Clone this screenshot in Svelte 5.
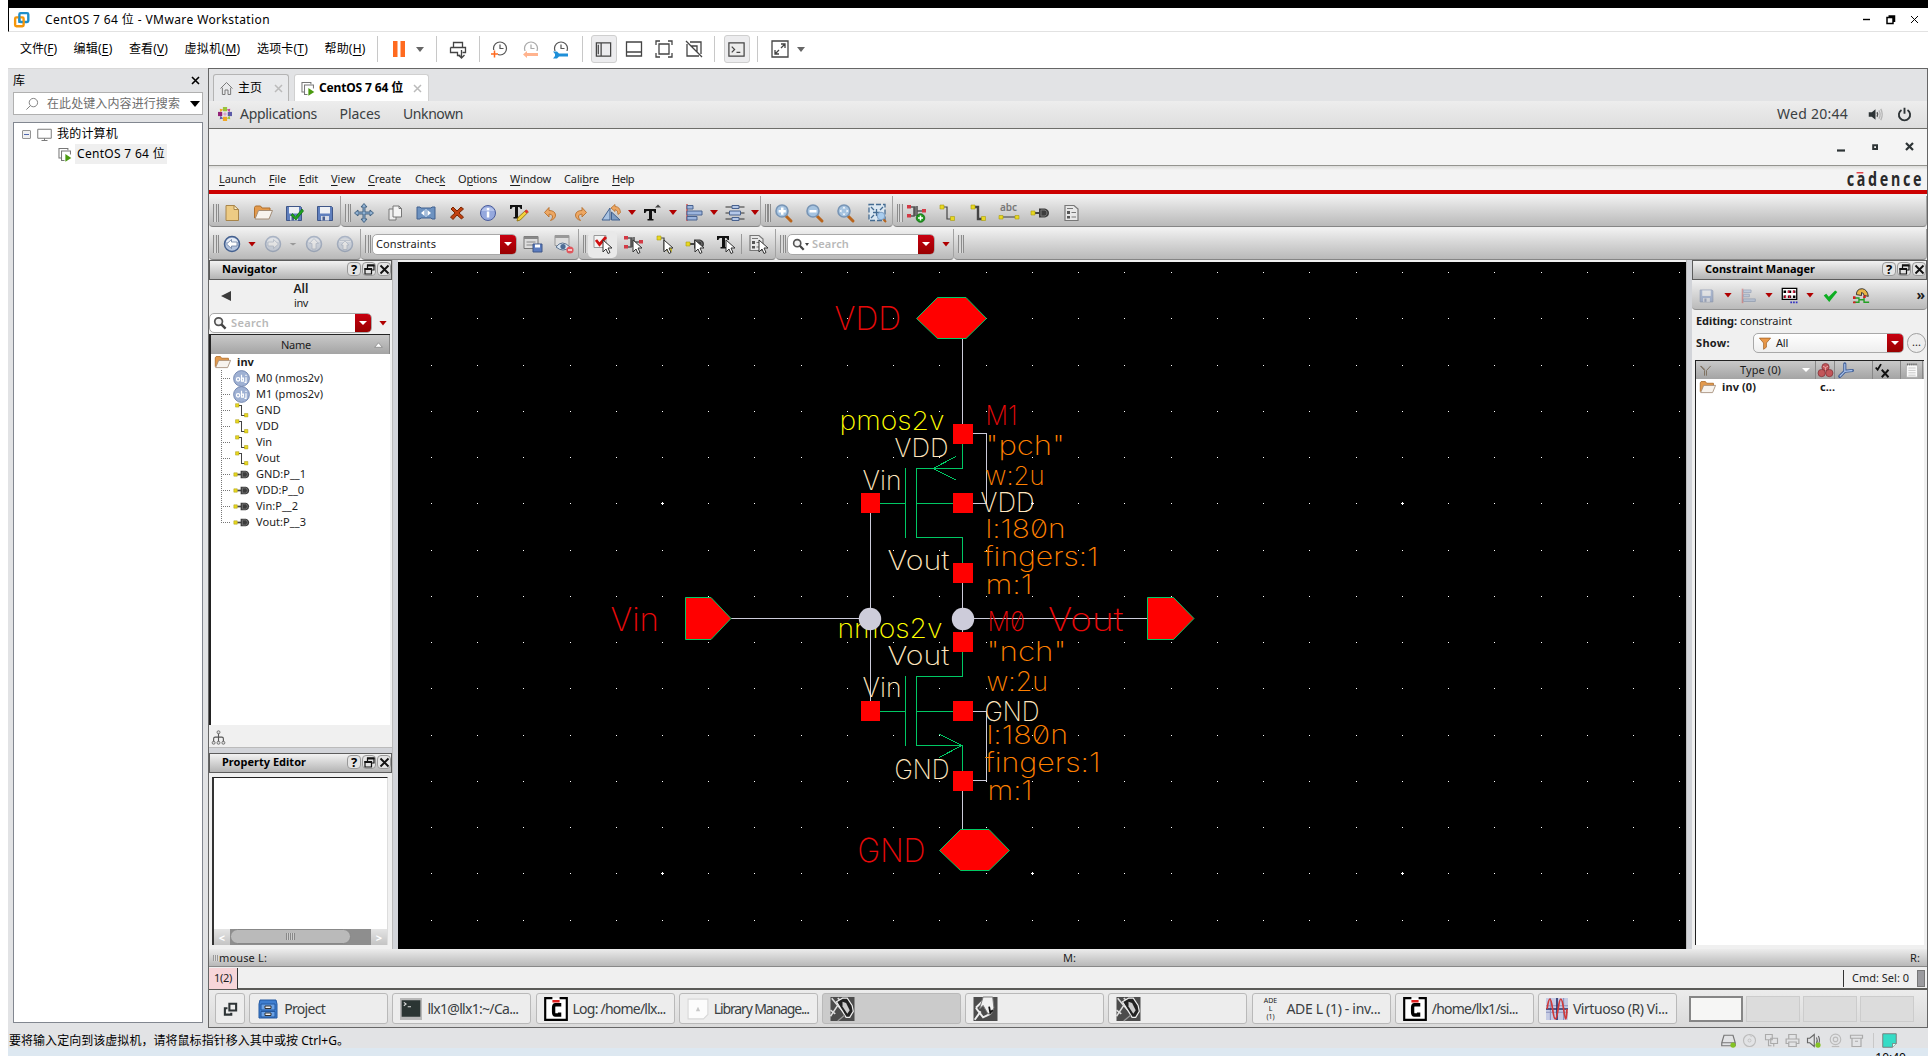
<script>
  // Spreads the letters of a label so that it takes up the given width.
  function fit(node, width) {
    if (!width) return;
    const natural = node.getBoundingClientRect().width;
    node.style.letterSpacing = (width - natural) / node.textContent.length + 'px';
  }

  const cursor = '<path d="M10 6v12l3-3 2 4.500 2-1-2-4.500h4z" fill="#fff" stroke="#333" stroke-width="1"/>';
  const disc = (o, arrow) =>
    `<g opacity="${o}"><circle cx="10" cy="10" r="7.500" fill="#b4c4de" stroke="#44608f" stroke-width="1.500"/><path d="M4 8a6.500 6.500 0 0 1 12 0z" fill="#e8eef8"/><g fill="#fff" stroke="#6b7f9f" stroke-width=".8">${arrow}</g></g>`;
  const floppy = '<path d="M2.500 3.500h14l1 1v13h-15z" fill="#5f7fbd" stroke="#3f5688"/><path d="M5 4h10v6.500H5z" fill="#eef0f4"/><path d="M6 13h8v4.500H6z" fill="#d6dbe6"/><path d="M7.500 13.500h2.500v4H7.500z" fill="#4a5f8f"/>';
  const wire = (w) => `<path d="M5 4h5v12h5" fill="none" stroke="#444" stroke-width="${w}"/><path d="M3 2h4v4H3zM13.500 13.500h4v4h-4z" fill="#e8d820" stroke="#a89a10" stroke-width=".6"/>`;
  const pin = '<path d="M5 10h5" stroke="#444" stroke-width="2"/><path d="M9 5.500h6q4 1 4 4.500t-4 4.500H9z" fill="#3c3c3c"/><path d="M11 7h4q2 1 2 3t-2 3h-4z" fill="none" stroke="#777"/><path d="M1 8h4v4H1z" fill="#e8d820" stroke="#a89a10" stroke-width=".6"/>';
  const inst = '<path d="M3 4h5v9H3M8 4h1v9M11 3v10M11 8h6" fill="none" stroke="#555" stroke-width="1.600"/><path d="M1 2h4v3.500H1zM1 11h4v3.500H1zM16 6h4v3.500h-4z" fill="#d33a45"/>';
  const lens = (inner) => `<path d="m12 13 5 5" stroke="#b8641c" stroke-width="3" stroke-linecap="round"/><circle cx="8" cy="8" r="6" fill="#a5c3e0" stroke="#7895b5" stroke-width="1.600"/>${inner}`;
  const doc = '<path d="M4 2.500h9l4 3.500v11.500H4z" fill="#e8e8e8" stroke="#777" stroke-width="1.200"/><path d="M6 8h3v3H6zM6 13h3v2.500H6z" fill="#555"/><path d="M10.500 9.500h4.500M10.500 14h4.500M6 5.500h6" stroke="#777"/>';
  const clock = '<circle cx="10" cy="9.500" r="6.500" fill="none" stroke="#555" stroke-width="1.200"/><path d="M10 5.500v4h3.500" fill="none" stroke="#555" stroke-width="1.200"/>';
  const vm = '<path d="M6 14H3.500V3H14v2" fill="none" stroke="#777" stroke-width="1.200"/><path d="M10 17H6.500V6H17v4" fill="none" stroke="#777" stroke-width="1.200"/><path d="m11 9.500 7 4.500-7 4.500z" fill="#4a9a10"/>';
  const schem = '<path d="M0 0h20v20H0z" fill="#4c4c4c"/><path d="M0 16 6 7l8 9M1 1l5 6M6 1l6 5M0 11l4 3" stroke="#ddd" stroke-width="1.300" fill="none"/><path d="m5 4 5-3h4l4 6 1 5-3 5h-3l-3-5z" fill="#222" stroke="#eee" stroke-width="1"/><path d="m10 4 3 1 3 6-2 3-4-6z" fill="#ccc"/><path d="m12 15-6 5" stroke="#999"/>';

  const icons = {
    new: '<path d="M4 2.500h8l4.500 4v11H4z" fill="#edcb84" stroke="#a8854a"/><path d="M12 2.500v4h4.500z" fill="#fff0c8" stroke="#a8854a"/>',
    open: '<path d="M1.500 15V4.500l1-1.500h5l1.500 2h8v3" fill="#e39a4c" stroke="#b06f2c"/><path d="m2 16 3.500-8.500H19.500L16 16z" fill="#f7f3ee" stroke="#a38d78"/>',
    saveok: floppy + '<path d="m8.500 10.500 3 3.500 6.500-8 1.500 2-7.500 9-5-4.500z" fill="#1fa51f" stroke="#0c6a0c" stroke-width=".7"/>',
    save: floppy,
    saveoff: `<g opacity=".4">${floppy}</g>`,
    move: '<path d="M10 0.500 13 4h-2v5h5V7l3.500 3-3.500 3v-2h-5v5h2l-3 3.500L7 16h2v-5H4v2L.5 10 4 7v2h5V4H7z" fill="#8fb0d0" stroke="#3a5a7c" stroke-width=".9"/>',
    copy: '<path d="M4 6h7v11H4z" fill="#eee" stroke="#777"/><path d="M8 3h6l2.500 2.500V14H8z" fill="#f4f4f4" stroke="#777"/><path d="M14 3v2.500h2.500" fill="none" stroke="#777"/>',
    stretch: '<path d="M1 4h3l1 1h10l1-1h3v12h-3l-1-1H5l-1 1H1z" fill="#6d92c0" stroke="#41618f"/><path d="M8.500 7v6L5 10zM11.500 7v6l3.500-3z" fill="#fff"/><path d="M9.500 6h1v8h-1z" fill="#dfe9f5"/>',
    del: '<path d="m4 6 2-2 4 4 4-4 2.500 2L12 10l4.500 4-2 2-4.500-4-4 4.500L3.500 14 8 10z" fill="#c04010" stroke="#7a2500"/>',
    info: '<circle cx="10" cy="10" r="7.500" fill="#95a8dd" stroke="#4a5c9c"/><path d="M3.500 8a7 6 0 0 1 13 0z" fill="#b4c2ea"/><path d="M8.800 8.500h2.500v6H8.800zM8.800 5h2.500v2.300H8.800z" fill="#fff"/>',
    tedit: '<path d="M1 2h12v4h-1.500q0-2-2-2H9v10h1.500v1.500H4.500V14H6V4H4.500q-2 0-2 2H1z" fill="#111"/><path d="m8 18 1-3.500L17 7l2.300 2-8 8z" fill="#f2d23c" stroke="#8a6a00" stroke-width=".8"/><path d="m15.500 8.500 2-2 2 2-2 2z" fill="#d33"/>',
    undo: '<path d="M4.500 9.500 9 4.500v3q6 0 6.500 4.500 0 4-5 5.500 2.500-2.500 2-4.500-.8-2-3.500-2v3z" fill="#eda763" stroke="#b8702c" stroke-width=".9"/>',
    redo: '<path d="M15.500 9.500 11 4.500v3q-6 0-6.500 4.500 0 4 5 5.500-2.500-2.500-2-4.500.8-2 3.500-2v3z" fill="#eda763" stroke="#b8702c" stroke-width=".9"/>',
    rotate: '<path d="M8 5v12H0z" fill="#a9c3e2" stroke="#41618f"/><path d="M9.500 9 18 17H9.500z" fill="#7d9cc4" stroke="#41618f"/><path d="m9 5 4-3.500v2q5 0 5.500 6l-2.500 2q.3-4.500-3-5v2z" fill="#eda763" stroke="#b8702c" stroke-width=".8"/>',
    tup: '<path d="M1 6h12v4h-1.500q0-2-2-2H9v8h1.500v1.500H4.500V16H6V8H4.500q-2 0-2 2H1z" fill="#111"/><path d="M12 4.500 15 1.500l3 3z" fill="#444"/>',
    align: '<path d="M3 1v17" stroke="#c33" stroke-width="1.200"/><path d="M3 2.500h6v3.500H3zM3 8h15v4H3zM3 13.500h10v3.500H3z" fill="#9bb4dd" stroke="#48628f"/>',
    alignoff: '<g opacity=".4"><path d="M3 2v17" stroke="#c33" stroke-width="2"/><path d="M4 3.500h9v3H4zM4 8.500h7v3H4zM4 14h14v3H4z" fill="#9bb4dd" stroke="#48628f"/></g>',
    distrib: '<path d="M0.500 4h19M.5 10h19M.5 16h19" stroke="#333"/><path d="M7 2.500h7v3H7zM4.500 8h11v4h-11zM7 14.500h7v3H7z" fill="#b5c8e8" stroke="#48628f"/>',
    zoomin: lens('<path d="M7 4.500h2.500v2.400h2.300v2.500H9.500v2.300H7V9.400H4.600V6.900H7z" fill="#fff"/>'),
    zoomout: lens('<path d="M4.500 7h7v2.500h-7z" fill="#fff"/>'),
    zoomfit: lens('<path d="m8 3.500 1.500 2h-3zM8 12.500l1.500-2h-3zM3.500 8l2-1.500v3zM12.500 8l-2-1.500v3z" fill="#fff"/>'),
    zoomarea: '<path d="M2 1.500h16v16H2z" fill="#dce8f2" stroke="#456c92" stroke-width="1.300" stroke-dasharray="5 2"/><path d="M6 9.500h7M9.500 6v7M4 4l3 3M16 4l-3 3M4 15l3-3" stroke="#456c92" fill="none" stroke-width="1.300"/><path d="m15 15 4 4" stroke="#b8641c" stroke-width="2"/><circle cx="14" cy="13" r="3.800" fill="#a9cdee" stroke="#7fa0c4"/>',
    instadd: inst + '<circle cx="14.500" cy="15" r="4.300" fill="#1d981d" stroke="#0a600a" stroke-width=".7"/><path d="M14.500 12.500v5M12 15h5" stroke="#fff" stroke-width="1.500"/>',
    wire: wire(1.2),
    widewire: wire(2.4),
    label: '<path d="M2 14h16" stroke="#555" stroke-width="1.200"/><path d="M0 12.500h4v3.500H0zM16 12.500h4v3.500h-4z" fill="#e8d820" stroke="#a89a10" stroke-width=".6"/>',
    pin,
    doc,
    back: disc(1, '<path d="m4.500 10 5-4.500V8H15v4H9.500v2.500z"/>'),
    fwd: disc(0.35, '<path d="m15.500 10-5-4.500V8H5v4h5.500v2.500z"/>'),
    up: disc(0.35, '<path d="m10 4.500 4.500 5H12V15H8V9.500H5.500z"/>'),
    top: disc(0.35, '<path d="M5 5h10v1.500H5zM10 7l4 4h-2v4.500H8V11H6z"/>'),
    panelsave: '<path d="M1 2.500h14v12H1z" fill="#ddd" stroke="#777"/><path d="M1 2.500h14v2.500H1z" fill="#888"/><path d="M3.500 8h9M3.500 11h9" stroke="#888"/><path d="M10 10h9v8h-9z" fill="#5b7cc0" stroke="#3f5688"/><path d="M12 10.500h5v3h-5z" fill="#fff"/>',
    paneleye: '<path d="M1 1.500h14v10H1z" fill="#ddd" stroke="#999"/><path d="M1 1.500h14v2.500H1z" fill="#999"/><path d="M2 13q6-8 14 0-7 6-14 0z" fill="#d8e4f0" stroke="#5c7390"/><circle cx="9" cy="12.500" r="2.600" fill="#4d6c94"/><circle cx="16" cy="16" r="3.600" fill="#e0565c"/><path d="M14 16h4" stroke="#fff" stroke-width="1.300"/>',
    selcheck: '<path d="M1 1.500h12v12H1z" fill="#f4f4f4" stroke="#999"/><path d="m3 6 3.500 4.500L13 3" fill="none" stroke="#d01010" stroke-width="2.800"/>' + cursor,
    selinst: inst + cursor,
    selwire: wire(1.2) + cursor,
    selpin: pin + cursor,
    seltext: '<path d="M1 2h12v4h-1.500q0-2-2-2H9v9h1.500v1.500H4.500V13H6V4H4.500q-2 0-2 2H1z" fill="#111"/>' + cursor,
    seldoc: `<g transform="translate(-3 -1)">${doc}</g>` + cursor,
    matrix: '<path d="M1.500 1.500h17v13h-17z" fill="#fff" stroke="#000" stroke-width="1.500"/><path d="M3 4h3v3H3zM8 4h4v3H8zM14 4h3v3h-3zM3 10h3v3H3zM8 10h4v3H8zM14 10h3v3h-3z" fill="#000"/><path d="M8 4h2v3H8zM14 4h2v3h-2zM4 10h2v3H4zM9 10h2v3H9z" fill="#e02040"/><path d="M11 18h9" stroke="#3030c0" stroke-width="2" stroke-dasharray="2 1.200"/>',
    check: '<path d="m2 10 3-2 3 3.500L15.500 4 18 6 8.500 17.500z" fill="#0eae22"/>',
    revert: '<path d="M4 9q0-7 7-7 6 1 7 9l-5-1q0-3-3-3.500V10z" fill="#e9b445" stroke="#222"/><path d="M1 13h6v5H1m6-3h6m0-3v6h6" fill="none" stroke="#22a022" stroke-width="1.600"/><path d="M0 11h3v3H0zM0 17h3v2H0zM12 10h3v3h-3z" fill="#d02020"/>',
    funnel: '<path d="M2 3h16l-6 7v6l-4 3v-9z" fill="#e99848" stroke="#9b5a20"/>',
    funneloff: '<path d="m2 3 6.500 7v8M18 3l-6.500 7v8M3 3l6.500 6" fill="none" stroke="#7d7060" stroke-width="1.500"/>',
    cubes: '<g fill="#c2565a" stroke="#7c2b30" stroke-width=".8"><circle cx="10" cy="6" r="4.300"/><circle cx="5.500" cy="13" r="4.300"/><circle cx="14.500" cy="13" r="4.300"/></g><path d="m7 5 3 1.500L13 5M10 6.500V10" stroke="#f0b0b0" fill="none"/>',
    axes: '<path d="M8 2v9l-6 6M8 11l9-1" fill="none" stroke="#3a5a95" stroke-width="3.600" stroke-linecap="round"/><path d="M8 2v9l-6 6M8 11l9-1" fill="none" stroke="#a8c0e8" stroke-width="1.500"/>',
    cx: '<path d="m1 6 2.500 3L8 1.500M9 2" fill="none" stroke="#111" stroke-width="2.500"/><path d="m9 9 9 10M18 9 9 19" stroke="#111" stroke-width="2.500"/>',
    notes: '<path d="M3 3h14v16H3z" fill="#fafafa" stroke="#aaa"/><path d="M4 3h12" stroke="#555" stroke-width="2.500" stroke-dasharray="1.300 1.300"/><path d="M5.500 7.500h9M5.500 10.500h9M5.500 13.500h9M5.500 16.500h9" stroke="#bbb"/>',
    obj: '<circle cx="10" cy="10" r="9.300" fill="#9fb1d3" stroke="#6c80ab"/><circle cx="6" cy="11" r="2" fill="none" stroke="#fff" stroke-width="1.400"/><path d="M10 5.500v7.500h2.300v-3.500H10M15.300 8.500v6h-1.800M15.300 5.500v1.500" fill="none" stroke="#fff" stroke-width="1.400"/>',
    tree: '<path d="M10 4v12M3.500 16v-4.500q0-2 2-2h9q2 0 2 2V16" fill="none" stroke="#555" stroke-width="1.500"/><g fill="#ddd" stroke="#555"><circle cx="10" cy="3" r="2"/><circle cx="3.500" cy="17" r="2"/><circle cx="10" cy="17" r="2"/><circle cx="16.500" cy="17" r="2"/></g>',
    lensgray: '<circle cx="8" cy="8" r="5.500" fill="#f4f4f4" stroke="#555" stroke-width="2.500"/><path d="m12 12 6 6" stroke="#444" stroke-width="3.500"/>',
    pause: '<path d="M4 2h4.500v16H4zM11.500 2H16v16h-4.500z" fill="#ff6a1f"/>',
    send: '<path d="M5.500 3.500h9v5h-9zM2.500 8.500h15v5h-3M2.500 8.500v5h7v3h3" fill="none" stroke="#444" stroke-width="1.300"/><path d="M13.500 11v8m-3-3 3 3 3-3" fill="none" stroke="#444" stroke-width="1.300"/>',
    snap: clock + '<path d="M0 11h8v8H0z" fill="#fff"/><path d="M4.500 11.500v7M1 15h7" stroke="#ff6a1f" stroke-width="1.500"/>',
    snapback: `<g opacity=".5">${clock}<path d="M1 12h18v8H1z" fill="#fff"/><path d="m2 15.500 4-3.500v2h11v3H6v2z" fill="#ff6a1f"/></g>`,
    snapman: clock + '<path d="M1 12h18v8H1z" fill="#fff"/><path d="M2 12.500h4l2 2h9v3H8l-2 2H2l2-2.500v-2z" fill="#1e8fd8"/>',
    side: '<path d="M2.500 3h15v14h-15zM7.500 3v14M4.500 5v10" fill="none" stroke="#444" stroke-width="1.300"/>',
    bottom: '<path d="M2.500 3h15v14h-15zM2.500 13h15" fill="none" stroke="#444" stroke-width="1.300"/>',
    full: '<path d="M2 6V2h4M14 2h4v4M18 14v4h-4M6 18H2v-4M5 5h10v10H5z" fill="none" stroke="#444" stroke-width="1.300"/>',
    unity: '<path d="M3 5v12h12M6 3h11v12M2 2l16 16M7 7h6v6" fill="none" stroke="#444" stroke-width="1.300"/>',
    console: '<path d="M2 3h16v14H2z" fill="#ececec" stroke="#444" stroke-width="1.300"/><path d="m5 7 3 3-3 3M10 13h4" fill="none" stroke="#444" stroke-width="1.300"/>',
    expand: '<path d="M2 2h16v16H2zM11 5h4v4M15 5l-4 4M9 15H5v-4M5 15l4-4" fill="none" stroke="#444" stroke-width="1.300"/>',
    vmware: '<rect x="7.500" y="2.500" width="10.500" height="10.500" rx="1.500" fill="none" stroke="#1f8ec9" stroke-width="2.800"/><rect x="2.500" y="7.500" width="10" height="10.500" rx="1.500" fill="none" stroke="#f5960a" stroke-width="2.800"/><path d="M7.500 6v7H11" fill="none" stroke="#1f8ec9" stroke-width="2.400"/>',
    home: '<path d="m2 10 8-8 8 8M4.500 9v9H8v-6h4v6h3.500V9" fill="none" stroke="#777" stroke-width="1.300"/>',
    vm,
    monitor: '<path d="M1 3h18v12H1zM10 15v3M6 18h8" fill="none" stroke="#777" stroke-width="1.300"/>',
    search: '<circle cx="12" cy="8" r="6" fill="none" stroke="#777" stroke-width="1.300"/><path d="m8 12-6 6" stroke="#777" stroke-width="1.300"/>',
    gnome: '<path d="M7 0h6v6H7z" fill="#9ac43c"/><path d="M7 14h6v6H7z" fill="#efa724"/><path d="M0 7h6v6H0z" fill="#932279"/><path d="M14 7h6v6h-6z" fill="#5c5ba8"/><path d="m2.500 2.500 5 1-4 4z" fill="#efa724"/><path d="m17.500 2.500-5 1 4 4z" fill="#c04a94"/><path d="m2.500 17.500 5-1-4-4z" fill="#5c5ba8"/><path d="m17.500 17.500-5-1 4-4z" fill="#9ac43c"/><path d="m10 6 1 3 3 1-3 1-1 3-1-3-3-1 3-1z" fill="#d8a0c8"/>',
    volume: '<path d="M1 7h4l5-4v14l-5-4H1z" fill="#2e3436"/><path d="M12 7q2 3 0 6" fill="none" stroke="#555" stroke-width="2"/><path d="M14.500 4.500q3.500 5.500 0 11M17 2.500q4 7.500 0 15" fill="none" stroke="#b5b5b5" stroke-width="1.800"/>',
    power: '<path d="M6 4a7.500 7.500 0 1 0 8 0M10 1v8" fill="none" stroke="#2e3436" stroke-width="2.500"/>',
    switcher: '<path d="M8.500 3h9v9h-9zM6 9H2.500v8.500H11V15" fill="none" stroke="#2e3436" stroke-width="2.800"/>',
    cabinet: '<path d="M2 1h16l1 4v14H1V5z" fill="#3e7ed0" stroke="#2358a0"/><path d="M3 5h14v6H3zM3 12.500h14v5.500H3z" fill="#6ba2e6" stroke="#2358a0"/><path d="M7 7h6v2.500H7zM7 14h6v2.500H7z" fill="#f2f2f2" stroke="#333"/>',
    term: '<path d="M0 0h20v20H0z" fill="#b8b8b8"/><path d="M1.500 2h17v15h-17z" fill="#2b3533"/><path d="m3.500 4 2 1.500-2 1.500M7 8h3" stroke="#ddd" fill="none"/>',
    cad: '<path d="M7 1H1v18h18V1h-6" fill="#fff" stroke="#000" stroke-width="1.800"/><path d="M7 3.500h6" stroke="#e02020" stroke-width="2"/><path d="M13 8V6.500H9.500Q8 6.500 8 9v3.500q0 2.500 1.500 2.500H13v-2" fill="none" stroke="#000" stroke-width="2.800"/>',
    paper: '<path d="M1 1h18v14l-4 4H1z" fill="#fcfcfc" stroke="#d8d8d8"/><path d="m8 12 2-4 2 4z" fill="#c8c8c8"/>',
    schem,
    sym: '<path d="M0 0h20v20H0z" fill="#4c4c4c"/><path d="m1 19 5-7M2 9l6-6M2 9l6 8 6-3" stroke="#eee" stroke-width="1.600" fill="none"/><path d="m8 0h8l1 9-2 5-3 0-4-7-3 3z" fill="#f0f0f0" stroke="#777" stroke-width=".8"/><path d="m13 8 1 5 2-2" stroke="#111" stroke-width="1.500" fill="none"/>',
    wave: '<path d="M0 0h20v20H0z" fill="#c5cbe4"/><path d="M0 7h20M0 13h20M4 0v20M16 0v20" stroke="#8a93bd"/><path d="M0 10h20M10 0v20" stroke="#26306a" stroke-width="1.500"/><path d="M1 10q2.500-18 5 0t5 0 5 0 3 0" fill="none" stroke="#d03a3a" stroke-width="1.600"/>',
    hdd: '<path d="M4 3h12l3 10v4H1v-4zM1 13h18" fill="none" stroke="#777" stroke-width="1.600"/><circle cx="16" cy="16" r="3.500" fill="#84c225"/>',
    cd: '<circle cx="10" cy="10" r="8" fill="none" stroke="#bbb" stroke-width="1.500"/><circle cx="10" cy="10" r="2" fill="none" stroke="#bbb"/><path d="m10 3 3 2" stroke="#bbb"/>',
    net: '<path d="M2 2h9v7H2zM9 7h9v7H9zM6 9v8h4M13 14v4" fill="none" stroke="#aaa" stroke-width="1.500"/>',
    printer: '<path d="M5 8V2h10v6M5 14H1.500V8h17v6H15M5 12h10v6H5z" fill="none" stroke="#aaa" stroke-width="1.600"/>',
    sound: '<path d="M2 7h3l6-5v16l-6-5H2zM14 6q2 4 0 8M16.500 4q3 6 0 11" fill="none" stroke="#666" stroke-width="1.500"/><circle cx="16" cy="16" r="3.500" fill="#84c225"/>',
    cam: '<circle cx="10" cy="8.500" r="7" fill="none" stroke="#bbb" stroke-width="1.500"/><circle cx="10" cy="8.500" r="3" fill="none" stroke="#bbb" stroke-width="1.500"/><path d="M5 18h10" stroke="#bbb" stroke-width="1.500"/>',
    box: '<path d="M2 3h16v4H2zM4 7v11h12V7M8 11h4" fill="none" stroke="#aaa" stroke-width="1.600"/>',
    note: '<path d="M1 1h18v13l-5 5H1z" fill="#35dcc6" stroke="#777" stroke-width="1.200"/><path d="M14 19v-5h5" fill="#d8fff8" stroke="#777"/>'
  };

  const vmMenus = [['文件', 'F', 37], ['编辑', 'E', 39], ['查看', 'V', 39], ['虚拟机', 'M', 56], ['选项卡', 'T', 51], ['帮助', 'H', 41]];
  // Each tool: kind or icon name, distance from the previous tool's centre.
  const vmTools = [['|', 12], ['pause', 21], ['v', 21], ['|', 17], ['send', 21], ['|', 22], ['snap', 20], ['snapback', 31], ['snapman', 30], ['|', 22], ['side*', 21], ['bottom', 30], ['full', 30], ['unity', 30], ['|', 21], ['console*', 22], ['|', 21], ['expand', 22], ['v', 21]];

  const menus = [['', 'L', 'aunch', 37, 13], ['', 'F', 'ile', 17, 13], ['', 'E', 'dit', 19, 13], ['', 'V', 'iew', 24, 13], ['', 'C', 'reate', 33, 14], ['Chec', 'k', '', 30, 13], ['O', 'p', 'tions', 39, 13], ['', 'W', 'indow', 41, 13], ['Cali', 'b', 're', 35, 13], ['', 'H', 'elp', 22, 0]];

  const row1 = [
    { w: 132, items: ['new', 'open', 'saveok', 'save'] },
    { w: 420, items: ['move', 'copy', 'stretch', 'del', 'info', 'tedit', 'undo', 'redo', 'rotate', 'v', 'tup', 'v', 'align', 'v', 'distrib', 'v'] },
    { w: 132, items: ['zoomin', 'zoomout', 'zoomfit', 'zoomarea'] },
    { w: 0, items: ['instadd', 'wire', 'widewire', 'label', 'pin', 'doc'] }
  ];
  const row2 = [
    { w: 152, items: ['back', 'v', 'fwd', '-', 'up', 'top'] },
    { w: 218, items: ['combo', 'panelsave', 'paneleye'] },
    { w: 197, items: ['selcheck', 'selinst', 'selwire', 'selpin', 'seltext', '|', 'seldoc'] },
    { w: 178, items: ['search', 'v'] },
    { w: 0, items: [] }
  ];

  const nets = [['obj', 'M0 (nmos2v)', 67], ['obj', 'M1 (pmos2v)', 67], ['wire', 'GND', 25], ['wire', 'VDD', 23], ['wire', 'Vin', 16], ['wire', 'Vout', 24], ['pin', 'GND:P__1', 50], ['pin', 'VDD:P__0', 48], ['pin', 'Vin:P__2', 42], ['pin', 'Vout:P__3', 50]];
  const cmTools = [['saveoff', 14], ['v', 22], ['alignoff', 20], ['v', 21], ['matrix', 20], ['v', 21], ['check', 20], ['revert', 31]];
  const tasks = [
    ['cabinet', 'Project', 41, 20], ['term', 'llx1@llx1:~/Ca...', 91, 22], ['cad', 'Log: /home/llx...', 93, 24], ['paper', 'Library Manage...', 95, 22],
    ['schem', '', 0, 25], ['sym', '', 0, 25], ['schem', '', 0, 25], ['ade', 'ADE L (1) - inv...', 94, 22], ['cad', '/home/llx1/si...', 86, 24], ['wave', 'Virtuoso (R) Vi...', 95, 22]
  ];
  const devices = ['hdd', 'cd', 'net', 'printer', 'sound', 'cam', 'box'];

  const cols = Array.from({ length: 28 }, (_, i) => 430.8 + i * 46.24);
  const rows = Array.from({ length: 15 }, (_, i) => 272.2 + i * 46.24);
  const pads = [[953, 424], [953, 493], [953, 563], [861, 493], [953, 632], [953, 701], [861, 701], [953, 771]];
  // Schematic labels: text, colour, left, right, baseline, cap height.
  const R = '#e80a0a', Y = '#ffff00', C = '#ffe6bf', O = '#ff8000';
  const labels = [
    ['VDD', R, 836, 899.5, 329.7, 24], ['pmos2v', Y, 841, 943, 429.7, 19], ['M1', R, 987, 1016, 424.7, 19.5],
    ['VDD', C, 896, 947, 456.7, 19], ['"pch"', O, 987, 1063.5, 454.7, 19.5], ['Vin', C, 864, 900, 489.7, 19.5],
    ['w:2u', O, 987, 1043, 484.5, 19], ['VDD', C, 982, 1033, 512.4, 19.5], ['l:180n', O, 987, 1064, 537.7, 19],
    ['Vout', C, 889, 948, 570.3, 19.5], ['fingers:1', O, 985.5, 1097, 565.7, 19], ['m:1', O, 987, 1031, 593.7, 19.5],
    ['Vin', R, 612, 657.5, 630.7, 24], ['M0', R, 989, 1023.5, 630.7, 19.5], ['Vout', R, 1049.5, 1122, 630.7, 24],
    ['nmos2v', Y, 839, 941, 637.7, 19.5], ['"nch"', O, 988, 1065, 661, 19.5], ['Vout', C, 889, 948, 664.7, 19],
    ['w:2u', O, 988, 1046.5, 690.7, 19.5], ['Vin', C, 864, 900, 697.4, 19.5], ['GND', C, 986, 1038, 720.7, 19.5],
    ['l:180n', O, 988, 1066.5, 743.7, 19], ['fingers:1', O, 986.5, 1099, 771.7, 19.5], ['GND', C, 896, 948, 778.7, 19.5],
    ['m:1', O, 989, 1031, 799.7, 19.5], ['GND', R, 859, 924, 861.7, 24]
  ];
</script>

{#snippet icon(name, size = 20)}
  <svg class="ic" width={size} height={size} viewBox="0 0 20 20">{@html icons[name]}</svg>
{/snippet}

{#snippet t(text, w, cls = '')}
  <span class="t {cls}" use:fit={w}>{text}</span>
{/snippet}

{#snippet dockHead(title, w)}
  <header class="dock-head">
    {@render t(title, w, 'b')}
    <span class="grow"></span>
    <i class="hb">?</i>
    <i class="hb"><svg width="11" height="11" viewBox="0 0 11 11"><path d="M3.500 4V1h6.500v5H7.500M1 4.500h6.500v5.500H1z" fill="none" stroke="#111" stroke-width="1.200" /><path d="M3 1.500h7.500M.5 5h7" stroke="#111" stroke-width="2" /></svg></i>
    <i class="hb"><svg width="11" height="11" viewBox="0 0 11 11"><path d="m1.500 1.500 8 8m0-8-8 8" stroke="#111" stroke-width="1.900" /></svg></i>
  </header>
{/snippet}

{#snippet toolbar(groups, cls)}
  <div class="toolbar {cls}">
    {#each groups as g}
      <div class="group" class:grow={!g.w} style:width={g.w ? g.w + 'px' : null}>
        <i class="grip"></i>
        {#each g.items as it}
          {#if it === 'v'}<i class="dd"></i>
          {:else if it === '-'}<i class="dd off"></i>
          {:else if it === '|'}<i class="bar"></i>
          {:else if it === 'combo'}
            <div class="combo wide">{@render t('Constraints', 60)}<i class="redbtn"></i></div>
          {:else if it === 'search'}
            <div class="combo find">{@render icon('lensgray', 13)}<i class="tiny"></i>{@render t('Search', 37, 'ghost')}<i class="redbtn"></i></div>
          {:else if it === 'label'}
            <span class="tool abc"><b>abc</b>{@render icon(it)}</span>
          {:else}<span class="tool" class:on={it === 'selcheck'}>{@render icon(it)}</span>{/if}
        {/each}
      </div>
    {/each}
  </div>
{/snippet}

<div class="screen">
  <div class="black"></div>
  <div class="title">
    {@render icon('vmware', 17)}
    {@render t('CentOS 7 64 位 - VMware Workstation', 225)}
    <span class="grow"></span>
    <svg width="60" height="14" viewBox="0 0 60 14"><path d="M2 6.500h7" stroke="#000" stroke-width="1.400" /><path d="M26 4.500h6v6h-6zM27.500 3h6v6" fill="none" stroke="#000" stroke-width="1.500" /><path d="m50 3 7 7m0-7-7 7" stroke="#000" /></svg>
  </div>
  <div class="menu">
    {#each vmMenus as [name, key, w]}
      <span class="t" use:fit={w}>{name}(<u>{key}</u>)</span>
    {/each}
    {#each vmTools as [k, gap]}
      <span class="slot" style:margin-left="{gap}px">
        {#if k === '|'}<i class="vline"></i>
        {:else if k === 'v'}<i class="vdd"></i>
        {:else if k.endsWith('*')}<i class="pressed">{@render icon(k.slice(0, -1), 19)}</i>
        {:else}{@render icon(k)}{/if}
      </span>
    {/each}
  </div>

  <div class="main">
    <aside>
      <div class="lib">{@render t('库', 12)}<span class="grow"></span><svg width="9" height="9" viewBox="0 0 9 9"><path d="m1 1 7 7m0-7-7 7" stroke="#000" stroke-width="1.600" /></svg></div>
      <div class="lsearch">{@render icon('search', 14)}{@render t('在此处键入内容进行搜索', 133)}<span class="grow"></span><i class="btri"></i></div>
      <div class="ltree">
        <div class="lrow"><i class="minus"></i>{@render icon('monitor', 15)}{@render t('我的计算机', 61)}</div>
        <div class="lrow sub">{@render icon('vm', 17)}<span class="hl">{@render t('CentOS 7 64 位', 88)}</span></div>
      </div>
    </aside>

    <section class="guest">
      <div class="tabs">
        <div class="tab">{@render icon('home', 15)}{@render t('主页', 24)}<span class="grow"></span><svg width="9" height="9" viewBox="0 0 9 9"><path d="m1 1 7 7m0-7-7 7" stroke="#bbb" stroke-width="1.500" /></svg></div>
        <div class="tab active">{@render icon('vm', 17)}{@render t('CentOS 7 64 位', 84, 'b')}<span class="grow"></span><svg width="9" height="9" viewBox="0 0 9 9"><path d="m1 1 7 7m0-7-7 7" stroke="#bbb" stroke-width="1.500" /></svg></div>
      </div>
      <div class="gnome">
        {@render icon('gnome', 14)}
        {@render t('Applications', 77)}{@render t('Places', 41)}{@render t('Unknown', 60)}
        <span class="grow"></span>
        {@render t('Wed 20:44', 71)}{@render icon('volume', 15)}{@render icon('power', 15)}
      </div>
      <div class="wintitle">
        <svg width="80" height="12" viewBox="0 0 80 12"><path d="M1 9.500h8" stroke="#2e3436" stroke-width="2.200" /><path d="M37.200 4.200h3.800v3.800h-3.800z" fill="none" stroke="#2e3436" stroke-width="2" /><path d="m70 2 7 7m0-7-7 7" stroke="#2e3436" stroke-width="2.200" /></svg>
      </div>
      <div class="appmenu">
        {#each menus as [a, k, z, w, gap]}
          <span class="mi" style:margin-right="{gap}px"><span class="t" use:fit={w}>{a}<u>{k}</u>{z}</span></span>
        {/each}
        <span class="grow"></span>
        <span class="brand">c<span class="macron">a</span>dence</span>
      </div>
      {@render toolbar(row1, 'first')}
      {@render toolbar(row2, '')}

      <div class="work">
        <div class="left">
          {@render dockHead('Navigator', 55)}
          <div class="nav">
            <i class="prev"></i>
            <div class="scope">{@render t('All', 15, 'all')}{@render t('inv', 14)}</div>
          </div>
          <div class="nfind">
            <div class="combo find2">{@render icon('lensgray', 14)}{@render t('Search', 38, 'ghost')}<i class="redbtn"></i></div>
            <i class="dd"></i>
          </div>
          <div class="ntree">
            <div class="nhead">{@render t('Name', 30)}<svg width="9" height="6" viewBox="0 0 9 6"><path d="M.7 5.300h7.600L4.500.8z" fill="#fff" stroke="#888" stroke-width=".8" /></svg></div>
            <div class="nroot">{@render icon('open', 17)}{@render t('inv', 17, 'b')}</div>
            <div class="nlist">
              {#each nets as [ic, name, w]}
                <div class="nrow"><i class="dots"></i><span class="nic">{@render icon(ic, 17)}</span>{@render t(name, w)}</div>
              {/each}
            </div>
          </div>
          <div class="nfoot">{@render icon('tree', 15)}</div>
          <div class="hsplit"></div>
          {@render dockHead('Property Editor', 84)}
          <div class="prop">
            <div class="pbox">
              <div class="scroll"><i class="sb">&lt;</i><i class="track"><i class="thumb"></i></i><i class="sb">&gt;</i></div>
            </div>
          </div>
        </div>
        <div class="vsplit"></div>

        <svg class="canvas" viewBox="398 262 1288 687">
          <g fill="#fff" shape-rendering="crispEdges">
            {#each rows as y, j}{#each cols as x, i}
              <rect x={Math.round(x)} y={Math.round(y)} width="1" height="1" />
              {#if i % 8 === 5 && j % 8 === 5}<path d="M{Math.round(x) - 1} {Math.round(y)}h3v1h-3zM{Math.round(x)} {Math.round(y) - 1}h1v3h-1z" />{/if}
            {/each}{/each}
          </g>
          <g fill="none" stroke="#cccbda" shape-rendering="crispEdges">
            <path d="M962.500 338V829M870.500 513V701M731 618.500H870M963 618.500h184M973 433.500h13.500v70H973M973 711.500h13.500v69H973" />
          </g>
          <path d="M962.500 443V564M962.500 652V771" stroke="#000" stroke-width="3" />
          <g fill="none" stroke="#00c864" shape-rendering="crispEdges">
            <path d="M962.500 443v25.500h-46v69h46V564M905.500 468v70M880 503.500h25M916 503.500h37M956 456.500l-23 12 23 11.500" />
            <path d="M962.500 652v24.500h-46v69h46V771M905.500 676v70M880 711.500h25M916 711.500h37M939 734l23 11.500-23 12" />
          </g>
          <g fill="#f00">
            {#each pads as [x, y]}<rect {x} {y} width={x === 861 ? 19 : 20} height="20" />{/each}
            <g stroke="#00c864" stroke-width="1">
              <path d="M916.500 318.500l21-21h28.500l20.500 21-20.500 20h-28.500z" />
              <path d="M939.500 850.500l21-21H989l20.500 21-20.500 20h-28.500z" />
              <path d="M685.500 597.500H711l20 21-20 21h-25.500z" />
              <path d="M1147.500 597.500h26l20.500 21-20.500 21h-26z" />
            </g>
          </g>
          {#each labels as [s, fill, x1, x2, y, cap]}
            <text x={x1 - 1.5} {y} {fill} font-size={cap / 0.727} textLength={x2 - x1 + 3} lengthAdjust="spacingAndGlyphs">{s}</text>
          {/each}
          <circle cx="870" cy="619" r="11.200" fill="#cdccda" />
          <circle cx="963" cy="619" r="11.200" fill="#cdccda" />
        </svg>

        <div class="vsplit"></div>
        <div class="right">
          {@render dockHead('Constraint Manager', 110)}
          <div class="cmtools">
            {#each cmTools as [k, gap]}
              <span class="slot" style:margin-left="{gap}px">{#if k === 'v'}<i class="dd"></i>{:else}{@render icon(k, 17)}{/if}</span>
            {/each}
            <span class="grow"></span><b class="more">»</b>
          </div>
          <div class="edit">{@render t('Editing:', 41, 'b')}{@render t('constraint', 52)}</div>
          <div class="show">
            {@render t('Show:', 34, 'b')}
            <div class="combo showbox">{@render icon('funnel', 14)}{@render t('All', 12)}<i class="redbtn"></i></div>
            <i class="ell">...</i>
          </div>
          <div class="ctable">
            <div class="chead">
              <span class="c0">{@render icon('funneloff', 13)}{@render t('Type (0)', 41)}<i class="wtri"></i></span>
              <span class="c1">{@render icon('cubes', 17)}</span>
              <span class="c2">{@render icon('axes', 17)}</span>
              <span class="c3">{@render icon('cx', 15)}</span>
              <span class="c4">{@render icon('notes', 16)}</span>
            </div>
            <div class="crow">{@render icon('open', 17)}{@render t('inv (0)', 34, 'b')}{@render t('c...', 15, 'b cc')}</div>
          </div>
        </div>
      </div>

      <div class="mouse"><i class="minigrip"></i>{@render t('mouse L:', 48)}<span class="mid">{@render t('M:', 13)}</span>{@render t('R:', 10)}</div>
      <div class="stat"><span class="pink">{@render t('1(2)', 18)}</span><span class="grow"></span><span class="cmd">{@render t('Cmd: Sel: 0', 57)}</span><i class="size"></i></div>
      <div class="taskbar">
        <div class="task sw">{@render icon('switcher', 15)}</div>
        {#each tasks as [ic, name, w, size], i}
          <div class="task" class:pressedtask={i === 4} class:roomy={i === 0}>
            {#if ic === 'ade'}<span class="ade">ADE<br />L<br />(1)</span>{:else}{@render icon(ic, size)}{/if}
            {#if name}{@render t(name, w)}{/if}
          </div>
        {/each}
        <div class="spaces"><i class="cur"></i><i></i><i></i><i></i></div>
      </div>
    </section>
  </div>

  <div class="status">
    {@render t('要将输入定向到该虚拟机，请将鼠标指针移入其中或按 Ctrl+G。', 340)}
    <span class="grow"></span>
    {#each devices as d}{@render icon(d, 15)}{/each}
    <i class="vline short"></i>
    {@render icon('note', 15)}
  </div>
  <div class="host"><span>10:40</span></div>
</div>

<style>
  :global(body) { margin: 0; background: #fff; overflow: hidden; }
  .screen { width: 1928px; height: 1056px; display: flex; flex-direction: column; overflow: hidden; box-sizing: border-box; font: 12px/1 'Noto Sans', 'Noto Sans CJK SC', sans-serif; color: #000; background: #fff; }
  .screen :global(*) { box-sizing: border-box; }
  i { font-style: normal; }
  .t { display: inline-block; white-space: pre; flex: none; line-height: 16px; }
  .t.b { font-weight: 700; }
  .ic { display: block; flex: none; overflow: visible; }
  .grow { flex: 1; }
  u { text-underline-offset: 2px; text-decoration-thickness: 1px; }
  .black { height: 8px; margin-left: 8px; background: #000; flex: none; }
  .title { height: 24px; margin-left: 8px; padding: 0 7px 0 4px; flex: none; display: flex; align-items: center; border-bottom: 1px solid #e2e2e2; border-left: 1px solid #000; }
  .title .t { margin-left: 15px; }
  .menu { height: 36px; padding: 0 0 2px 20px; flex: none; display: flex; align-items: center; gap: 0; }
  .menu > .t { margin-right: 16.500px; }
  .menu > .t:nth-of-type(6) { margin-right: 0; }
  .slot { width: 0; display: flex; justify-content: center; align-items: center; flex: none; }
  .vline { width: 1px; height: 26px; background: #c8c8c8; flex: none; }
  .vdd { flex: none; border: 4px solid transparent; border-top: 5px solid #666; border-bottom: 0; }
  .pressed { flex: none; width: 26px; height: 28px; display: grid; place-items: center; background: #ececee; border: 1px solid #cfcfcf; border-radius: 3px; }
  .main { flex: 1; display: flex; min-height: 0; margin-left: 8px; background: #e2e3e5; }
  aside { width: 200px; flex: none; padding: 0 5px; display: flex; flex-direction: column; border-top: 1px solid #d8d8d8; }
  .lib { height: 23px; display: flex; align-items: center; padding-right: 3px; }
  .lsearch { height: 23px; background: #fff; border: 1px solid #b0b0b0; display: flex; align-items: center; padding: 0 2px 0 11px; color: #6d6d6d; }
  .lsearch .t { margin-left: 8px; }
  .btri { border: 5px solid transparent; border-top: 6px solid #000; border-bottom: 0; }
  .ltree { margin-top: 7px; height: 901px; border: 1px solid #828790; background: #fff; padding-top: 1px; }
  .lrow { height: 20px; display: flex; align-items: center; padding-left: 8px; }
  .lrow .ic { margin: 0 5px 0 6px; }
  .minus { width: 9px; height: 9px; border: 1px solid #949494; background: linear-gradient(#5068b0, #5068b0) center / 5px 1px no-repeat #f0f0f0; border-radius: 1px; }
  .lrow.sub { padding-left: 36px; height: 20px; }
  .lrow.sub .ic { margin-right: 2px; }
  .hl { background: #efefef; padding: 2px; height: 20px; width: 92px; }

  .guest { flex: 1; min-width: 0; display: flex; flex-direction: column; border: 1px solid #666; }
  .tabs { height: 32px; flex: none; display: flex; align-items: flex-end; padding-left: 4px; gap: 5px; background: #e2e3e5; }
  .tab { height: 27px; width: 76px; border: 1px solid #b4b4b4; border-bottom: 0; border-radius: 3px 3px 0 0; background: #e9eaec; display: flex; align-items: center; padding: 0 5px; }
  .tab .t { margin-left: 4px; }
  .tab.active { width: 135px; background: #fff; border-color: #d0d0d0; padding: 0 6px 0 4px; }
  .tab.active .t { margin-left: 3px; }
  .gnome { height: 28px; flex: none; display: flex; align-items: center; padding: 0 15px 1px 9px; background: linear-gradient(#ededed, #dedede); border-bottom: 1px solid #6e6e6a; font: 14px 'Noto Sans', sans-serif; color: #3a4042; }
  .gnome .t { margin-left: 22.500px; }
  .gnome .ic + .t { margin-left: 8px; }
  .gnome .t + .ic { margin-left: 20px; }
  .gnome .ic + .ic { margin-left: 14px; }
  .wintitle { height: 37px; flex: none; background: #f4f4f4; border-bottom: 1px solid #94948f; display: flex; justify-content: flex-end; align-items: center; padding: 0 11px 0 0; }
  .appmenu { height: 28px; flex: none; border-bottom: 4px solid #c00; background: linear-gradient(#dcdcda, #f3f3f3 4px); display: flex; align-items: center; padding: 2px 6px 0 10px; font: 11px 'Noto Sans', sans-serif; color: #1c1c1c; }
  .mi { display: flex; }
  .brand { font: 700 19px 'Noto Sans', sans-serif; color: #2a2a2a; letter-spacing: 3.600px; transform: scaleX(.75); transform-origin: right; line-height: 20px; margin-right: -3px; }
  .macron { background: linear-gradient(#e0404a, #e0404a) 0 6px / 9px 1.500px no-repeat; }
  .toolbar { height: 33px; flex: none; display: flex; background: #f0f0f0; padding-top: 2px; font: 11px 'Noto Sans', sans-serif; }
  .group { display: flex; align-items: center; flex: none; background: linear-gradient(#f0f0f0, #dcdcdc 35%, #b9b9b9); border-bottom: 1px solid #858585; border-right: 1px solid #a2a2a2; border-radius: 0 0 4px 4px; }
  .first .group { padding-top: 3px; }
  .group.grow { flex: 1; }
  .grip { width: 6px; height: 18px; margin: 0 -3px 0 4px; background: repeating-linear-gradient(90deg, #8c8c8c 0 1px, #d8d8d8 1px 2.500px); flex: none; }
  .tool { width: 31px; display: flex; justify-content: center; flex: none; }
  .tool.on { background: #e9e9e9; border-radius: 5px; height: 27px; align-items: center; width: 29px; margin-left: 2px; }
  .abc { position: relative; }
  .abc b { position: absolute; top: -1px; font-size: 10px; line-height: 11px; color: #777; font-weight: 600; }
  .dd { width: 10px; flex: none; height: 5px; background: #b00000; clip-path: polygon(10% 0, 90% 0, 50% 100%); }
  .dd.off { background: #999; height: 3px; }
  .bar { width: 1px; height: 20px; background: #999; margin-right: 1px; }
  .combo { display: flex; align-items: center; background: #fff; border: 1px solid #a8a8a8; border-radius: 5px; height: 21px; overflow: hidden; flex: none; color: #222; }
  .redbtn { width: 16px; height: 100%; margin-left: auto; background: linear-gradient(#c80010, #980000); display: grid; place-items: center; flex: none; }
  .redbtn::after { content: ''; border: 4px solid transparent; border-top: 4px solid #fff; border-bottom: 0; }
  .wide { width: 145px; margin-left: 4px; padding-left: 3px; }
  .find { width: 148px; margin-left: 4px; padding-left: 4px; }
  .tiny { border: 2.500px solid transparent; border-top: 3px solid #444; border-bottom: 0; margin-right: 3px; }
  .find + .dd { margin-left: 6px; }
  .t.ghost { color: #b8b8b8; font-weight: 600; }

  .work { flex: 1; min-height: 0; display: flex; background: #f0f0f0; font: 11px 'Noto Sans', sans-serif; color: #1c1c1c; }
  .left { width: 183px; flex: none; display: flex; flex-direction: column; }
  .dock-head { height: 20px; flex: none; display: flex; align-items: center; gap: 1px; padding: 0 0 2px 12px; border: 1px solid #5c5c5c; background: linear-gradient(#f2f2f2, #b4b4b4); color: #000; }
  .hb { width: 14px; height: 14px; border: 1px solid #999; border-radius: 4px; background: #e4e4e4; display: grid; place-items: center; font: 700 13px/12px 'Noto Sans', sans-serif; flex: none; }
  .vsplit { width: 6px; flex: none; background: #d2d4d9; border-left: 1px solid #bbb; }
  .nav { height: 33px; display: flex; align-items: center; padding: 0 0 1px 12px; }
  .prev { border: 5px solid transparent; border-right: 10px solid #3c3c3c; border-left: 0; }
  .scope { display: flex; flex-direction: column; align-items: center; margin-left: 61px; width: 18px; }
  .scope .t { line-height: 14px; }
  .t.all { font-size: 12px; font-weight: 600; }
  .nfind { display: flex; align-items: center; height: 20px; }
  .find2 { width: 163px; height: 20px; padding-left: 3px; }
  .find2 .t { margin-left: 4px; }
  .nfind .dd { margin-left: 6px; }
  .ntree { margin: 1px 2px 0 0; height: 391px; background: #fff; border-top: 1px solid #222; border-left: 2px solid #222; }
  .nhead { height: 19px; background: linear-gradient(#c9c9c9, #a4a4a4); display: flex; align-items: center; justify-content: space-between; padding: 0 6px 0 70px; border-right: 1px solid #888; }
  .nroot { height: 16px; display: flex; align-items: center; gap: 6px; padding-left: 3px; }
  .nlist { margin-left: 10px; background: repeating-linear-gradient(#777 0 1px, transparent 1px 2px) 0 0 / 1px 152px no-repeat; }
  .nrow { height: 16px; display: flex; align-items: center; }
  .dots { width: 10px; height: 1px; background: repeating-linear-gradient(90deg, #777 0 1px, transparent 1px 2px); }
  .nic { width: 17px; margin: 0 6px 0 2px; display: grid; place-items: center; }
  .nfoot { height: 22px; margin-top: 1px; padding: 4px 0 0 2px; border-bottom: 1px solid #bbb; }
  .hsplit { height: 5px; background: #d2d4d9; }
  .prop { flex: 1; padding: 4px 4px 4px 3px; }
  .pbox { height: 100%; background: #fff; border-top: 1px solid #222; border-left: 2px solid #333; border-right: 1px solid #ddd; display: flex; align-items: flex-end; }
  .scroll { display: flex; width: 100%; height: 16px; }
  .sb { width: 16px; background: linear-gradient(#e4e4e4, #c4c4c4); color: #fff; display: grid; place-items: center; font-weight: 700; font-size: 11px; }
  .track { flex: 1; background: #8e8e8e; }
  .thumb { display: block; width: 121px; height: 15px; border: 1px solid #888; border-radius: 8px; background: repeating-linear-gradient(90deg, #888 0 1px, #ccc 1px 2px) center / 9px 7px no-repeat, #bababa; }
  .canvas { display: block; width: 1288px; height: 687px; background: #000; margin-top: 2px; flex: none; }
  .canvas text { font-family: Inter, sans-serif; font-weight: 200; font-feature-settings: 'zero'; }
  .right { flex: 1; min-width: 0; display: flex; flex-direction: column; }
  .cmtools { height: 30px; display: flex; align-items: center; background: linear-gradient(#f0f0f0, #bababa); border-bottom: 1px solid #909090; border-radius: 0 0 4px 4px; padding: 1px 2px 0 0; }
  .more { font-size: 14px; line-height: 14px; }
  .edit { height: 22px; display: flex; align-items: center; gap: 3px; padding-left: 4px; }
  .show { height: 21px; display: flex; align-items: center; padding-left: 4px; }
  .showbox { width: 151px; height: 20px; margin-left: 23px; padding-left: 4px; background: linear-gradient(#fff, #eee); }
  .showbox .t { margin-left: 4px; }
  .ell { width: 19px; height: 20px; margin-left: 3px; border: 1px solid #a0a0a0; border-radius: 10px; background: #eee; text-align: center; line-height: 16px; }
  .ctable { margin: 7px 3px 4px 3px; flex: 1; background: #fff; border-top: 1px solid #222; border-left: 1px solid #222; }
  .chead { height: 18px; background: linear-gradient(#c9c9c9, #a4a4a4); display: flex; }
  .chead span { display: flex; align-items: center; justify-content: center; }
  .chead > span { border-right: 1px solid #888; flex: none; }
  .chead .c0 { width: 120px; justify-content: flex-start; padding-left: 3px; }
  .c0 .t { margin: 0 21px 0 28px; }
  .wtri { border: 4px solid transparent; border-top: 4px solid #fff; border-bottom: 0; }
  .chead .c1 { width: 19px; }
  .chead .c2 { width: 38px; justify-content: flex-start; padding-left: 3px; }
  .chead .c3 { width: 28px; justify-content: flex-start; padding-left: 2px; }
  .chead .c4 { width: 22px; }
  .crow { height: 16px; display: flex; align-items: center; padding-left: 3px; }
  .crow .t { margin-left: 6px; }
  .crow .t:last-child { margin-left: 64px; }

  .mouse { height: 18px; flex: none; background: linear-gradient(#ececec, #b8b8b8); border-bottom: 1px solid #888; display: flex; align-items: center; padding: 0 7px 0 4px; font: 11px 'Noto Sans', sans-serif; color: #1c1c1c; }
  .minigrip { width: 6px; height: 6px; background: repeating-linear-gradient(90deg, #999 0 1px, #ddd 1px 2px); }
  .mid { flex: 1; padding-left: 796px; }
  .stat { height: 23px; flex: none; background: #f0f0f0; border-bottom: 2px solid #5a5a57; display: flex; align-items: center; padding: 1px 2px 0 0; font: 11px 'Noto Sans', sans-serif; color: #1c1c1c; }
  .pink { width: 29px; height: 21px; background: #f7d6d9; border-right: 1px solid #333; display: grid; place-items: center; }
  .cmd { border-left: 1px solid #333; padding: 0 8px; height: 17px; display: flex; align-items: center; }
  .size { width: 8px; height: 17px; background: #9a9a9e; border: 1px solid #777; }
  .taskbar { height: 37px; flex: none; display: flex; align-items: center; gap: 4.200px; padding: 0 11px 0 6px; background: linear-gradient(#ececec, #dadada); font: 14px 'Noto Sans', sans-serif; color: #3a4042; }
  .task { width: 139px; height: 31px; flex: none; border: 1px solid #b9b9b9; border-radius: 3px; background: #ededed; display: flex; align-items: center; padding-left: 7px; overflow: hidden; }
  .task .t { margin-left: 5px; }
  .task.sw { width: 30px; padding-left: 7px; }
  .task.roomy { padding-left: 8px; }
  .task.roomy .t { margin-left: 6px; }
  .pressedtask { background: #cbcbcb; }
  .task .ic { height: 24px; }
  .ade { font-size: 7px; line-height: 8px; width: 22px; text-align: center; color: #222; }
  .spaces { display: flex; gap: 3px; margin-left: 8px; }
  .spaces i { width: 54px; height: 26px; background: #dcdcdc; border: 1px solid #ccc; }
  .spaces .cur { background: #f6f6f5; border: 2px solid #868686; }
  .status { height: 20px; flex: none; margin-left: 8px; background: #e2e3e5; display: flex; align-items: center; padding: 5px 31px 0 1px; gap: 6.400px; }
  .status .short { height: 15px; margin: 0 2px; }
  .host { height: 8px; flex: none; margin-left: 8px; background: #dde8f1; overflow: hidden; display: flex; justify-content: flex-end; padding: 4px 22px 0 0; line-height: 12px; }
</style>
